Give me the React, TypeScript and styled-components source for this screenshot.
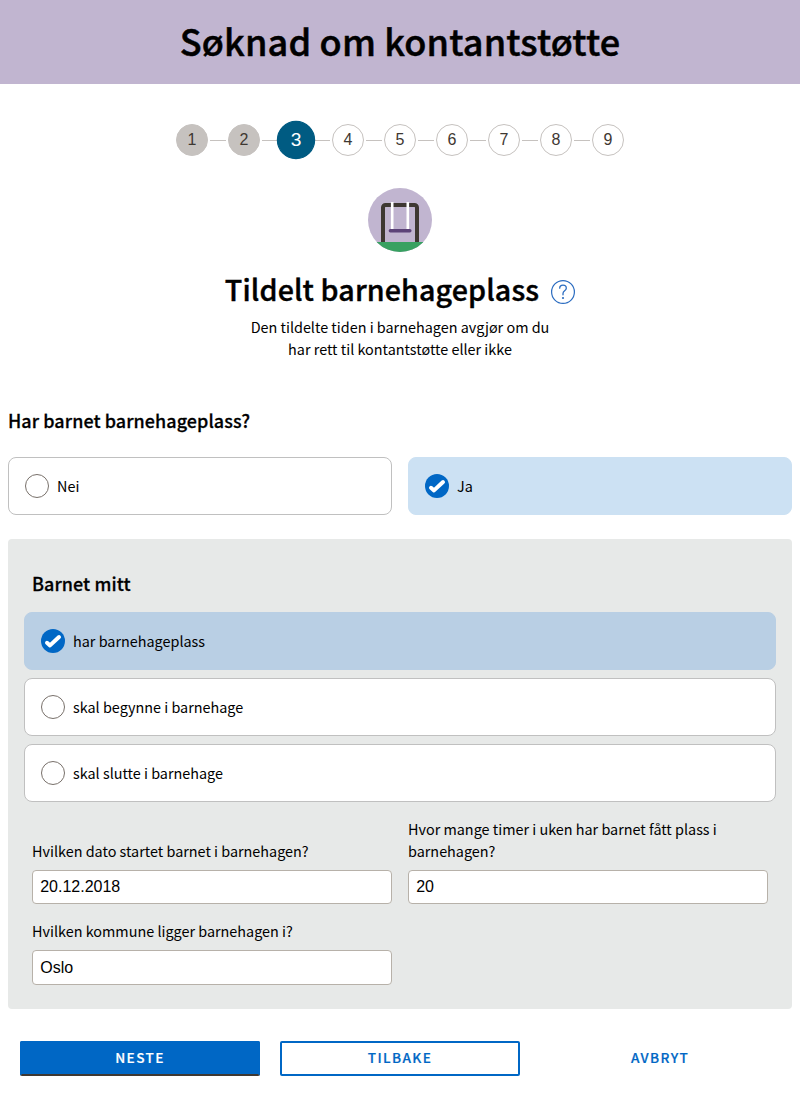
import React from 'react';
import styled, { createGlobalStyle, css } from 'styled-components';

const GlobalStyle = createGlobalStyle`
  *, *::before, *::after { box-sizing: border-box; }
  body {
    margin: 0;
    background: #fff;
    color: #000;
    font-family: 'Noto Sans CJK JP', 'Noto Sans CJK SC', sans-serif;
    font-size: 14.4px;
    line-height: 22px;
  }
`;

const semibold = css`
  font-weight: 500;
  letter-spacing: 0.004em;
  -webkit-text-stroke: 0.014em currentColor;
`;

const Banner = styled.header`
  display: flex;
  align-items: center;
  justify-content: center;
  height: 84px;
  padding-bottom: 4px;
  background: #c1b5d0;
`;

const PageTitle = styled.h1`
  margin: 0;
  font-size: 36.05px;
  line-height: 50px;
  white-space: nowrap;
  ${semibold}
`;

const Page = styled.main`
  display: flex;
  flex-direction: column;
  padding: 40px 8px 32px;
`;

const Stepper = styled.ol`
  display: flex;
  align-items: center;
  justify-content: center;
  margin: 0;
  padding: 0;
  list-style: none;
`;

const Step = styled.li`
  display: flex;
  align-items: center;

  &:not(:last-child)::after {
    content: '';
    width: 20px;
    height: 1px;
    border: solid #fff;
    border-width: 0 2px;
    background: #c6c2bf;
  }
`;

type StepState = 'done' | 'active' | 'upcoming';

const StepCircle = styled.span<{ $state: StepState }>`
  display: flex;
  align-items: center;
  justify-content: center;
  width: 32px;
  height: 32px;
  border: 1px solid #c6c2bf;
  border-radius: 50%;
  background: #fff;
  color: #3e3832;
  font: 16px/30px 'Liberation Sans', Arial, sans-serif;
  ${({ $state }) => $state === 'done' && css`background: #c6c2bf;`}
  ${({ $state }) => $state === 'active' && css`
    z-index: 1;
    border-color: #005b82;
    background: #005b82;
    color: #fff;
    transform: scale(1.2);
  `}
`;

const Intro = styled.section`
  display: flex;
  flex-direction: column;
  align-items: center;
  margin-top: 32px;
  text-align: center;
`;

const TitleRow = styled.div`
  display: flex;
  align-items: center;
  gap: 12px;
  height: 40px;
  margin-top: 20px;
`;

const SectionTitle = styled.h2`
  margin: 0;
  padding-bottom: 7px;
  font-size: 28.65px;
  line-height: 40px;
  white-space: nowrap;
  ${semibold}
`;

const HelpButton = styled.button`
  display: flex;
  padding: 0;
  border: 0;
  background: none;
`;

const IntroText = styled.p`
  width: 310px;
  margin: 4px 0 0;
`;

const QuestionTitle = styled.h3`
  margin: 47px 0 24px;
  font-size: 17.95px;
  line-height: 26px;
  ${semibold}
`;

const OptionPair = styled.div`
  display: grid;
  grid-template-columns: 1fr 1fr;
  gap: 16px;
`;

const OptionStack = styled.div`
  display: grid;
  gap: 8px;
  margin: 0 -8px;
`;

const Option = styled.div<{ $fill?: string }>`
  display: flex;
  align-items: center;
  gap: 8px;
  height: 58px;
  padding: 0 16px;
  border: 1px solid ${({ $fill }) => $fill ?? '#c0c0c0'};
  border-radius: 8px;
  background: ${({ $fill }) => $fill ?? '#fff'};
`;

const Panel = styled.section`
  margin-top: 24px;
  padding: 31px 24px 24px;
  border-radius: 4px;
  background: #e7e9e8;
`;

const PanelTitle = styled.h3`
  margin: 0 0 16px;
  font-size: 17.95px;
  line-height: 26px;
  ${semibold}
`;

const Fields = styled.div`
  display: grid;
  grid-template-columns: 1fr 1fr;
  align-items: end;
  gap: 16px;
  margin-top: 16px;
`;

const Field = styled.label`
  display: flex;
  flex-direction: column;
  gap: 8px;
`;

const Input = styled.input<{ $height?: number }>`
  width: 100%;
  height: ${({ $height }) => $height ?? 34}px;
  padding: 0 7.2px;
  border: 1px solid #b7b1a9;
  border-radius: 4px;
  background: #fff;
  color: #000;
  font: 16px 'Liberation Sans', Arial, sans-serif;
`;

const Actions = styled.div`
  display: grid;
  grid-template-columns: repeat(3, 240px);
  justify-content: center;
  gap: 20px;
  margin-top: 32px;
`;

const Button = styled.button<{ $kind: 'main' | 'outline' | 'flat' }>`
  height: 35px;
  padding: 0 0 4px;
  border: 2px solid transparent;
  border-radius: 2px;
  background: transparent;
  color: #0067c5;
  font: 500 13.6px/20px 'Noto Sans CJK JP', 'Noto Sans CJK SC', sans-serif;
  letter-spacing: 1.4px;
  text-transform: uppercase;
  -webkit-text-stroke: 0.2px currentColor;
  ${({ $kind }) => $kind === 'outline' && css`border-color: #0067c5;`}
  ${({ $kind }) => $kind === 'main' && css`
    border-color: #0067c5;
    border-bottom-color: #3e3832;
    background: #0067c5;
    color: #fff;
  `}
`;

const SwingIcon = () => (
  <svg width="64" height="64" viewBox="0 0 64 64" aria-hidden="true">
    <defs>
      <clipPath id="swing-circle"><circle cx="32" cy="32" r="32" /></clipPath>
    </defs>
    <g clipPath="url(#swing-circle)">
      <rect width="64" height="64" fill="#c1b5d0" />
      <path d="M15 55V19.5a2.5 2.5 0 0 1 2.5-2.5h29a2.5 2.5 0 0 1 2.5 2.5V55" fill="none" stroke="#3e3832" strokeWidth="4" />
      <rect y="54" width="64" height="10" fill="#38a161" />
      <path d="M24.2 14v27.5M39.8 14v27.5" stroke="#fff" strokeWidth="2.6" />
      <path d="M22.4 42.7h19.4" stroke="#5c4378" strokeWidth="3.5" strokeLinecap="round" />
    </g>
  </svg>
);

const HelpIcon = () => (
  <svg width="24" height="24" viewBox="0 0 24 24" fill="none" stroke="#2b6cc0" aria-hidden="true">
    <circle cx="12" cy="12" r="11.4" strokeWidth="1.2" />
    <path d="M8.7 8.2C8.7 6.3 10 5.2 12 5.2s3.3 1.2 3.3 3c0 2.7-3.3 2.6-3.3 5.3v1.3" strokeWidth="1.3" strokeLinecap="round" />
    <circle cx="12" cy="18" r="1.1" fill="#2b6cc0" stroke="none" />
  </svg>
);

const RadioIcon = ({ checked = false }: { checked?: boolean }) => (
  <svg width="24" height="24" viewBox="0 0 24 24" fill="none" aria-hidden="true">
    {checked ? (
      <>
        <circle cx="12" cy="12" r="12" fill="#0067c5" />
        <path d="M6 13.8 9 16.4 18 8" stroke="#fff" strokeWidth="4" strokeLinecap="round" strokeLinejoin="round" />
      </>
    ) : (
      <circle cx="12" cy="12" r="11.5" fill="#fff" stroke="#78706a" />
    )}
  </svg>
);

const CURRENT_STEP = 3;
const steps = [1, 2, 3, 4, 5, 6, 7, 8, 9];

const stateOf = (step: number): StepState =>
  step < CURRENT_STEP ? 'done' : step === CURRENT_STEP ? 'active' : 'upcoming';

export default function App() {
  return (
    <>
      <GlobalStyle />
      <Banner>
        <PageTitle>Søknad om kontantstøtte</PageTitle>
      </Banner>
      <Page>
        <Stepper>
          {steps.map((step) => (
            <Step key={step}>
              <StepCircle $state={stateOf(step)}>{step}</StepCircle>
            </Step>
          ))}
        </Stepper>

        <Intro>
          <SwingIcon />
          <TitleRow>
            <SectionTitle>Tildelt barnehageplass</SectionTitle>
            <HelpButton aria-label="Hjelp"><HelpIcon /></HelpButton>
          </TitleRow>
          <IntroText>
            Den tildelte tiden i barnehagen avgjør om du<br />har rett til kontantstøtte eller ikke
          </IntroText>
        </Intro>

        <QuestionTitle>Har barnet barnehageplass?</QuestionTitle>
        <OptionPair>
          <Option><RadioIcon />Nei</Option>
          <Option $fill="#cce1f3"><RadioIcon checked />Ja</Option>
        </OptionPair>

        <Panel>
          <PanelTitle>Barnet mitt</PanelTitle>
          <OptionStack>
            <Option $fill="#b9cfe4"><RadioIcon checked />har barnehageplass</Option>
            <Option><RadioIcon />skal begynne i barnehage</Option>
            <Option><RadioIcon />skal slutte i barnehage</Option>
          </OptionStack>
          <Fields>
            <Field>
              Hvilken dato startet barnet i barnehagen?
              <Input defaultValue="20.12.2018" />
            </Field>
            <Field>
              Hvor mange timer i uken har barnet fått plass i barnehagen?
              <Input defaultValue="20" />
            </Field>
            <Field>
              Hvilken kommune ligger barnehagen i?
              <Input $height={35} defaultValue="Oslo" />
            </Field>
          </Fields>
        </Panel>

        <Actions>
          <Button $kind="main">Neste</Button>
          <Button $kind="outline">Tilbake</Button>
          <Button $kind="flat">Avbryt</Button>
        </Actions>
      </Page>
    </>
  );
}
